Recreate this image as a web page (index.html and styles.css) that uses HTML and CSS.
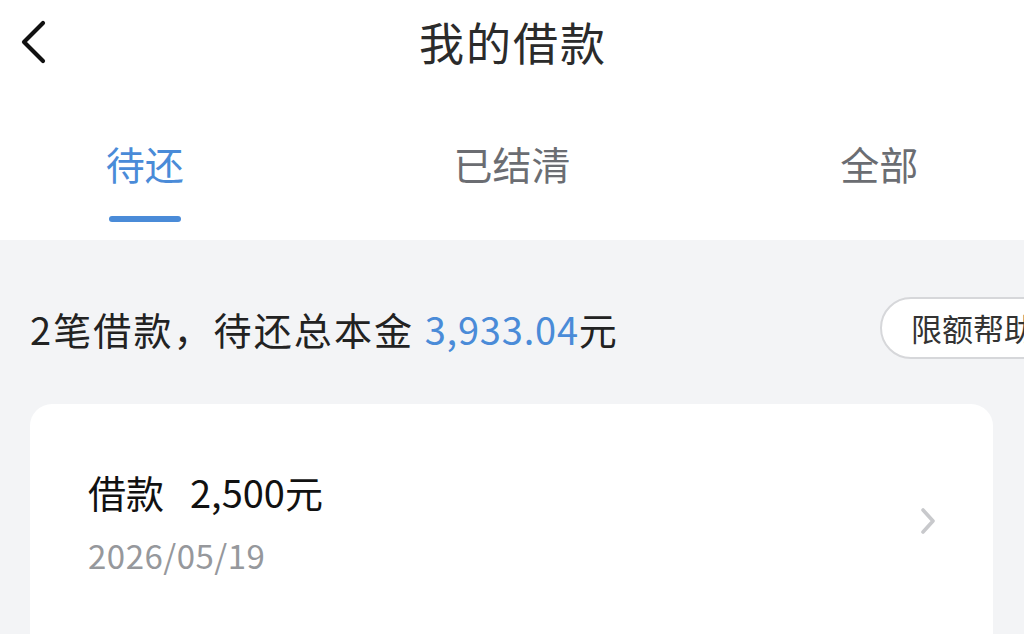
FILE: index.html
```html
<!DOCTYPE html>
<html lang="zh-CN">
<head>
<meta charset="utf-8">
<link rel="stylesheet" href="styles.css">
</head>
<body>
<div class="page">
  <header class="nav">
    <div class="nav-left">
      <svg class="back" width="30" height="44" viewBox="0 0 30 44"><polyline points="24,3 5,22 24,41" fill="none" stroke="#111" stroke-width="4.2" stroke-linecap="round" stroke-linejoin="round"/></svg>
    </div>
    <div class="nav-title">我的借款</div>
    <div class="nav-right"></div>
  </header>
  <nav class="tabs">
    <div class="tab active"><span class="tab-text">待还</span><span class="tab-bar"></span></div>
    <div class="tab"><span class="tab-text">已结清</span></div>
    <div class="tab"><span class="tab-text">全部</span></div>
  </nav>
  <main class="content">
    <div class="summary">
      <div class="summary-text">2笔借款，待还总本金 <span class="amount">3,933.04</span>元</div>
      <div class="help-btn">限额帮助</div>
    </div>
    <div class="card">
      <div class="card-info">
        <div class="card-title"><span>借款</span><span class="card-amount">2,500元</span></div>
        <div class="card-date">2026/05/19</div>
      </div>
      <svg class="arrow" width="18" height="28" viewBox="0 0 18 28"><polyline points="4,3 14,14 4,25" fill="none" stroke="#c8c9cc" stroke-width="3.6" stroke-linecap="round" stroke-linejoin="round"/></svg>
    </div>
  </main>
</div>
</body>
</html>
```
FILE: styles.css
```css
* { box-sizing: border-box; margin: 0; padding: 0; }
html, body { width: 1024px; height: 634px; overflow: hidden; }
body {
  font-family: "Noto Sans CJK SC", "Noto Sans", sans-serif;
  background: #f3f4f6;
  color: #333;
}
.page { width: 1024px; height: 634px; overflow: hidden; }
.nav {
  height: 84px;
  background: #fff;
  display: grid;
  grid-template-columns: 1fr auto 1fr;
  align-items: center;
}
.nav-left { display: flex; align-items: center; padding-left: 19px; }
.back { display: block; }
.nav-title {
  font-size: 45px;
  line-height: 84px;
  color: #2b2b2b;
  letter-spacing: 2px;
  padding-left: 2px;
}
.tabs {
  height: 156px;
  background: #fff;
  display: grid;
  grid-template-columns: repeat(3, 1fr);
  margin: 0 -39px;
}
.tab {
  display: flex;
  flex-direction: column;
  align-items: center;
  padding-top: 56px;
}
.tab-text {
  font-size: 39px;
  line-height: 46px;
  color: #6b6d72;
}
.tab.active .tab-text { color: #4a8bd8; }
.tab-bar {
  margin-top: 30px;
  width: 72px;
  height: 6px;
  border-radius: 3px;
  background: #4a8bd8;
}
.content { padding: 57px 0 0 30px; }
.summary {
  display: flex;
  align-items: center;
  justify-content: space-between;
  height: 62px;
  margin-right: -56px;
}
.summary-text {
  font-size: 38px;
  color: #222;
  letter-spacing: 2.1px;
}
.amount { color: #4a8bd8; letter-spacing: 0.8px; }
.help-btn {
  height: 62px;
  width: 200px;
  border: 2px solid #d6d7da;
  border-radius: 31px;
  background: #fff;
  font-size: 31px;
  line-height: 58px;
  padding-left: 29px;
  color: #333;
  white-space: nowrap;
}
.card {
  margin-top: 45px;
  width: 963px;
  height: 260px;
  background: #fff;
  border-radius: 22px;
  display: flex;
  align-items: flex-start;
  justify-content: space-between;
  padding: 60px 56px 0 58px;
}
.card-title {
  display: flex;
  gap: 26px;
  font-size: 38px;
  line-height: 56px;
  color: #111;
}
.card-date {
  margin-top: 15px;
  font-size: 33px;
  line-height: 40px;
  color: #96989c;
  letter-spacing: 0.5px;
}
.arrow { margin-top: 43px; }
```
